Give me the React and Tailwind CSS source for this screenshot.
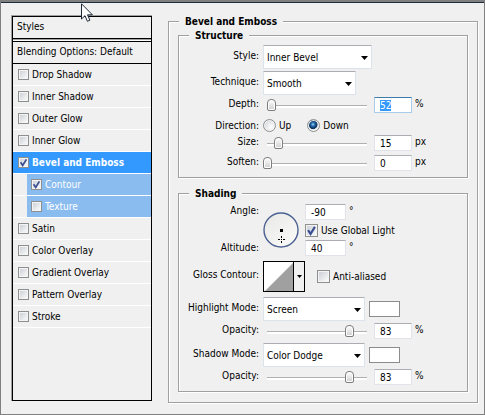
import React, { useState } from "react";
import clsx from "clsx";

const EFFECTS = [
  { name: "Drop Shadow" },
  { name: "Inner Shadow" },
  { name: "Outer Glow" },
  { name: "Inner Glow" },
  { name: "Bevel and Emboss", checked: true, active: true },
  { name: "Contour", checked: true, child: true },
  { name: "Texture", child: true },
  { name: "Satin" },
  { name: "Color Overlay" },
  { name: "Gradient Overlay" },
  { name: "Pattern Overlay" },
  { name: "Stroke" },
];

function CheckBox({ id, defaultChecked, large }) {
  return (
    <span className={clsx("grid shrink-0", large ? "size-[13px]" : "size-[11px]")}>
      <input
        id={id}
        type="checkbox"
        defaultChecked={defaultChecked}
        className="peer col-start-1 row-start-1 size-full appearance-none border border-[#8e8f8f] bg-linear-to-br from-[#c8ccd2] to-white shadow-[inset_0_0_0_1px_#f4f4f4]"
      />
      <svg
        viewBox="0 0 11 11"
        className="pointer-events-none invisible col-start-1 row-start-1 size-full peer-checked:visible"
      >
        <path d="M2.6 5.2 L4.7 8.4 L8.4 2.4" fill="none" stroke="#3b4f94" strokeWidth="1.8" />
      </svg>
    </span>
  );
}

function EffectRow({ effect }) {
  const id = effect.name.toLowerCase().replaceAll(" ", "-");
  return (
    <li className={clsx("border-b border-white", effect.child && "pl-3.5")}>
      <div
        className={clsx(
          "flex h-[21px] items-center gap-[3px]",
          effect.child ? "bg-[#8abcf0] pl-1 text-white" : "pl-[5px]",
          effect.active && "bg-[#3399ff] font-bold text-white"
        )}
      >
        <CheckBox id={id} defaultChecked={effect.checked} />
        <label htmlFor={id}>{effect.name}</label>
      </div>
    </li>
  );
}

function Group({ title, className, children }) {
  return (
    <fieldset
      className={clsx(
        "min-w-0 border border-[#a0a0a0] shadow-[1px_1px_0_#fff,inset_1px_1px_0_#fff]",
        className
      )}
    >
      <legend className="h-[13px] bg-[#f0f0f0] px-1.5 font-bold leading-[13px]">{title}</legend>
      {children}
    </fieldset>
  );
}

function Row({ label, htmlFor, className, children }) {
  return (
    <div className={clsx("flex items-center gap-1", className)}>
      <label htmlFor={htmlFor} className="w-20 shrink-0 pb-1 text-right">
        {label}
      </label>
      {children}
    </div>
  );
}

function DropDown({ id, value, className }) {
  return (
    <span className={clsx("grid h-6 items-center", className)}>
      <select
        id={id}
        defaultValue={value}
        className="col-start-1 row-start-1 h-6 w-full appearance-none rounded-[1px] border border-[#dde3ec] border-t-[#abadb3] bg-white pl-[3px] pt-px"
      >
        <option>{value}</option>
      </select>
      <svg
        viewBox="0 0 7 4"
        className="pointer-events-none col-start-1 row-start-1 mr-1 mt-0.5 h-1 w-[7px] justify-self-end"
      >
        <path d="M0 0 H7 L3.5 4 Z" fill="#000" />
      </svg>
    </span>
  );
}

function NumberBox({ id, value, className, ...rest }) {
  return (
    <input
      id={id}
      type="text"
      defaultValue={value}
      className={clsx(
        "h-4 rounded-[1px] border border-[#e2e3ea] border-t-[#abadb3] bg-white pl-[5px] outline-none selection:bg-[#3399ff] selection:text-white focus:border-[#a8cbea] focus:border-t-[#3d7bad]",
        className
      )}
      {...rest}
    />
  );
}

function SliderRow({ label, id, position, value, unit, focused, className }) {
  const [pos, setPos] = useState(position);
  return (
    <Row label={label} htmlFor={id} className={clsx("h-4", className)}>
      <span className="flex items-center gap-[3px]">
        <input
          type="range"
          aria-label={`${label} slider`}
          value={pos}
          onChange={(e) => setPos(Number(e.target.value))}
          className="h-3.5 w-[108px] appearance-none bg-[linear-gradient(#b0b2b0,#b0b2b0),linear-gradient(#fff,#fff)] bg-[length:100px_1px,100px_2px] bg-[position:4px_7px,4px_8px] bg-no-repeat [&::-webkit-slider-thumb]:h-3 [&::-webkit-slider-thumb]:w-[9px] [&::-webkit-slider-thumb]:appearance-none [&::-webkit-slider-thumb]:rounded-t-[4px] [&::-webkit-slider-thumb]:rounded-b-[2px] [&::-webkit-slider-thumb]:border [&::-webkit-slider-thumb]:border-[#7d7d7d] [&::-webkit-slider-thumb]:bg-linear-to-b [&::-webkit-slider-thumb]:from-white [&::-webkit-slider-thumb]:to-[#cfcfcf] [&::-webkit-slider-thumb]:shadow-[inset_0_0_0_1px_#fff]"
        />
        <NumberBox
          id={id}
          value={value}
          className="w-[38px]"
          autoFocus={focused}
          onFocus={(e) => e.target.select()}
        />
        <span className="pb-1">{unit}</span>
      </span>
    </Row>
  );
}

function Radio({ label, defaultChecked }) {
  return (
    <label className="flex items-center gap-[3px]">
      <input
        type="radio"
        name="direction"
        defaultChecked={defaultChecked}
        className="size-[13px] appearance-none rounded-full border border-[#8e8f8f] bg-[radial-gradient(circle_at_65%_65%,#fff,#c9cdd2)] shadow-[inset_0_0_0_1px_#f4f4f4] checked:bg-[radial-gradient(circle_at_45%_40%,#8fd3f7_0,#1c5c9c_25%,#0b2d59_48%,#e4e7ea_55%)]"
      />
      {label}
    </label>
  );
}

function AngleDial() {
  return (
    <svg viewBox="0 0 36 36" className="size-9 shrink-0">
      <defs>
        <linearGradient id="dial" x1="0" y1="0" x2="1" y2="1">
          <stop offset="0" stopColor="#e8e8e6" />
          <stop offset="1" stopColor="#fbfbfa" />
        </linearGradient>
      </defs>
      <circle cx="18" cy="18" r="17" fill="url(#dial)" stroke="#4c6192" strokeWidth="1.4" />
      <path d="M17 17h3v3h-3z" fill="#000" />
      <path
        d="M18 24h1v2h-1zM18 29h1v2h-1zM15 27h2v1h-2zM20 27h2v1h-2zM18 27h1v1h-1z"
        fill="#000"
      />
    </svg>
  );
}

function ContourPicker() {
  return (
    <button
      type="button"
      id="gloss"
      className="flex h-[31px] w-[42px] items-center border border-black bg-[#f0f0f0]"
    >
      <svg viewBox="0 0 29 29" className="h-[29px] w-[29px] shrink-0 bg-white">
        <path d="M1 29 L29 1 V29 Z" fill="#a0a0a0" />
      </svg>
      <span className="flex h-full flex-1 items-center justify-center border-l border-black">
        <svg viewBox="0 0 5 3" className="h-[3px] w-[5px]">
          <path d="M0 0 H5 L2.5 3 Z" fill="#000" />
        </svg>
      </span>
    </button>
  );
}

function Swatch({ label }) {
  return (
    <button
      type="button"
      aria-label={label}
      className="h-4 w-[31px] border border-[#8c8c8c] bg-white"
    />
  );
}

function StyleList() {
  return (
    <nav className="mb-0.5 w-[141px] shrink-0 border-l border-t border-[#a0a0a0]">
      <div className="flex h-full flex-col border border-black">
        <h2 className="h-[21px] px-1 leading-[20px]">Styles</h2>
        <div className="h-1 border-y border-black bg-[#a0a0a0] shadow-[inset_0_-1px_0_#fff]" />
        <h2 className="h-[22px] border-b border-black px-1 leading-[19px]">
          Blending Options: Default
        </h2>
        <ul>
          {EFFECTS.map((effect) => (
            <EffectRow key={effect.name} effect={effect} />
          ))}
        </ul>
      </div>
    </nav>
  );
}

function Structure() {
  return (
    <Group title="Structure" className="mt-px pb-1.5 [&>legend]:ml-2.5">
      <Row label="Style:" htmlFor="style" className="mt-[3px]">
        <DropDown id="style" value="Inner Bevel" className="w-[109px]" />
      </Row>
      <Row label="Technique:" htmlFor="technique" className="mt-0.5">
        <DropDown id="technique" value="Smooth" className="w-[93px]" />
      </Row>
      <SliderRow label="Depth:" id="depth" position={4} value="52" unit="%" focused className="mt-0.5" />
      <div className="flex h-[22px] items-center gap-1 pt-0.5">
        <span className="w-20 shrink-0 text-right">Direction:</span>
        <div className="flex gap-4">
          <Radio label="Up" />
          <Radio label="Down" defaultChecked />
        </div>
      </div>
      <SliderRow label="Size:" id="size" position={11} value="15" unit="px" />
      <SliderRow label="Soften:" id="soften" position={0} value="0" unit="px" className="mt-1" />
    </Group>
  );
}

function Shading() {
  return (
    <Group title="Shading" className="mt-[9px] pb-1.5 [&>legend]:ml-2.5">
      <div className="mt-1 flex items-center gap-1">
        <div className="flex h-[52px] w-20 shrink-0 flex-col justify-between text-right leading-[13px]">
          <label htmlFor="angle">Angle:</label>
          <label htmlFor="altitude" className="pb-0.5">Altitude:</label>
        </div>
        <AngleDial />
        <div className="ml-0.5 flex flex-col">
          <div className="flex items-start gap-[3px]">
            <NumberBox id="angle" value="-90" className="w-[41px]" />
            <span className="leading-[13px]">°</span>
          </div>
          <div className="flex h-5 items-center gap-[3px]">
            <CheckBox id="global" large defaultChecked />
            <label htmlFor="global">Use Global Light</label>
          </div>
          <div className="flex items-start gap-[3px]">
            <NumberBox id="altitude" value="40" className="w-[41px]" />
            <span className="leading-[13px]">°</span>
          </div>
        </div>
      </div>
      <Row label="Gloss Contour:" htmlFor="gloss" className="mt-[5px]">
        <ContourPicker />
        <span className="ml-2 flex items-center gap-[3px]">
          <CheckBox id="aliased" large />
          <label htmlFor="aliased">Anti-aliased</label>
        </span>
      </Row>
      <Row label="Highlight Mode:" htmlFor="highlight" className="mt-[5px]">
        <DropDown id="highlight" value="Screen" className="w-[102px]" />
        <Swatch label="Highlight color" />
      </Row>
      <SliderRow label="Opacity:" id="highlight-opacity" position={83} value="83" unit="%" className="mt-0.5" />
      <Row label="Shadow Mode:" htmlFor="shadow" className="mt-1">
        <DropDown id="shadow" value="Color Dodge" className="w-[102px]" />
        <Swatch label="Shadow color" />
      </Row>
      <SliderRow label="Opacity:" id="shadow-opacity" position={83} value="83" unit="%" className="mt-0.5" />
    </Group>
  );
}

function Pointer() {
  return (
    <svg viewBox="0 0 12 19" className="pointer-events-none absolute left-20 top-px h-[19px] w-3">
      <path
        d="M.5 .8 V16 L4 12.7 L6.4 18.3 L8.9 17.2 L6.5 11.8 H11.4 Z"
        fill="#fff"
        stroke="#1c2838"
        strokeWidth="1"
      />
    </svg>
  );
}

export default function App() {
  return (
    <main className="relative border border-t-2 border-[#808080] bg-[#f0f0f0] font-['DejaVu_Sans_Condensed','DejaVu_Sans',sans-serif] text-[10px] leading-[15px] text-black">
      <div className="flex gap-4 border-t border-[#1f2c3c] pb-[11px] pl-2.5 pr-1.5 pt-3">
        <StyleList />
        <Group title="Bevel and Emboss" className="flex-1 px-[9px] pb-2.5 [&>legend]:ml-px">
          <Structure />
          <Shading />
        </Group>
      </div>
      <Pointer />
    </main>
  );
}
